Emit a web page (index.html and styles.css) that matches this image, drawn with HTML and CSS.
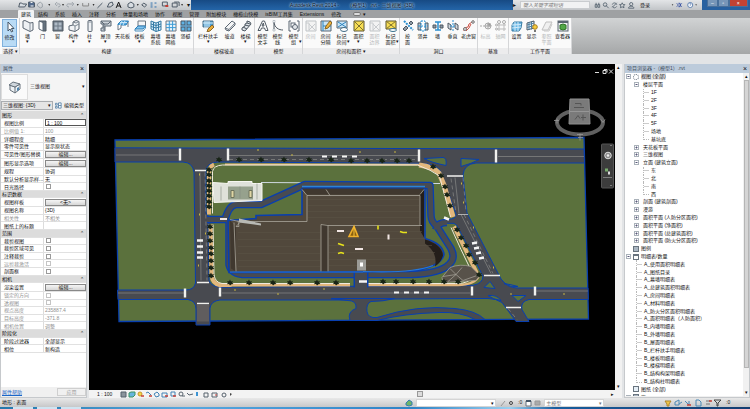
FILE: index.html
```
<!DOCTYPE html>
<html lang="zh-CN">
<head>
<meta charset="utf-8">
<title>Autodesk Revit 2014</title>
<link rel="stylesheet" href="styles.css">
</head>
<body>
<svg class="defs" aria-hidden="true">
  <defs>
    <g id="i-arrow"><path d="M4 1v9l2-2 1.500 3 1.300-.7L7.400 7.500H10z" fill="#fff" stroke="#456"/></g>
    <g id="i-wall"><path d="M1 1l2-.5L8 3l3-.5V10l-3 1.500L1 8z" fill="#eef1f4" stroke="#5b6672"/><path d="M8 3v8" stroke="#8a949e"/></g>
    <g id="i-door"><path d="M2 1h7v10H6" fill="#66727e" stroke="#4f5963"/><path d="M2 1l4 1.500V11L2 9z" fill="#fff" stroke="#5b6672"/></g>
    <g id="i-window"><path d="M1 1h10v10H1z" fill="#6e7a86" stroke="#4f5963"/><path d="M2.500 2.500h3v3h-3zM6.500 2.500h3v3h-3zM2.500 6.500h3v3h-3zM6.500 6.500h3v3h-3z" fill="#aebac6"/></g>
    <g id="i-comp"><path d="M1 6l4-1V2l3-1.500 3 1V9l-4 2.500L1 10z" fill="#f2f4f6" stroke="#5b6672"/><path d="M5 5l2 1v5M7 6l4-2M5 2l3 1 3-1.500" fill="none" stroke="#7d8892"/></g>
    <g id="i-column"><rect x="4" y=".5" width="4" height="11" rx="1" fill="#eef1f4" stroke="#5b6672"/><path d="M4 2h4" stroke="#8a949e"/></g>
    <g id="i-roof"><path d="M1 1h10v5H5v5H1V8h2V4H1z" fill="#cdd3d9" stroke="#5b6672"/><path d="M1 1l3 3M11 1L8 4H4v6" fill="none" stroke="#5b6672"/></g>
    <g id="i-ceiling"><path d="M1 4l3-3h7.500L9 5H1z" fill="#4fa8e0" stroke="#2d7fb8"/><path d="M3 2.500h7M5 1L3 5M8 1L6 5" stroke="#c7e5f8"/><path d="M1 5v5l3-2V5M11 2v5" fill="#fff" stroke="#6c7782"/></g>
    <g id="i-floor"><path d="M4 1h7.500v5H4z" fill="#f5f6f7" stroke="#6c7782"/><path d="M1 9l3-3h7.500L9 9z" fill="#83c5ee" stroke="#2d7fb8"/><path d="M1 9v2h8l2.500-3V6" fill="none" stroke="#4b90be"/></g>
    <g id="i-curtain"><path d="M1 1l5 2 5-2v9l-5 1.500L1 9z" fill="#d8edf9" stroke="#357ba5"/><path d="M1 4l5 1.500L11 4M1 6.500L6 8l5-1.500M3.500 2v8M6 3v8.500M8.500 2v9" fill="none" stroke="#357ba5"/></g>
    <g id="i-grid"><path d="M1 1h10v10H1z" fill="#e8f4fb" stroke="#6c7782"/><path d="M4.300 1v10M7.600 1v10M1 4.300h10M1 7.600h10" stroke="#3c9bd5"/></g>
    <g id="i-mullion"><path d="M1 1h4v4H1zM7 1h4v4H7zM1 7h4v4H1zM7 7h4v4H7z" fill="#5fb3e5" stroke="#4a5561"/><path d="M6 0v12M0 6h12" stroke="#267fb8"/></g>
    <g id="i-rail"><path d="M1 1h10v6H1z" fill="#4a9fd2" stroke="#4b6d84"/><path d="M3 1v8M5 1v9M7 1v6M1 3h10" stroke="#d8edf9"/><path d="M10 5L6 9l-1 3 3-1 4-4z" fill="#e9ad3d" stroke="#896527"/></g>
    <g id="i-ramp"><path d="M1 8l7-7 3 2v2l-6 6-3-1z" fill="#f4f5f6" stroke="#5b6672"/><path d="M1 8l4 1.500L11 3M5 9.500V11" fill="none" stroke="#6c7782"/></g>
    <g id="i-stair"><path d="M2 8l3-2V4l2-1V1l3 1 1 2-6 7-3-1z" fill="#dfe4e8" stroke="#4f5963"/><path d="M3 7l4 2M5 5l4 1M7 3l3 1" stroke="#4f5963"/></g>
    <g id="i-text"><path d="M1 10.500L5.500 1h2L11 10.500H8.500L7.500 8H4.500l-1 2.500zM5 6h2l-.7-3z" fill="#fff" stroke="#4f5963"/></g>
    <g id="i-line"><path d="M2 1v8M2 1c0 7 5 9 9 9" fill="none" stroke="#4f5963"/><path d="M1 .500h2v2H1zM1 9h2v2H1z" fill="#fff" stroke="#8a949e" stroke-width=".5"/></g>
    <g id="i-group"><path d="M3 1H1v10h2M9 1h2v10H9" fill="none" stroke="#5b6672"/><rect x="3" y="3" width="4" height="4" fill="#fff" stroke="#5b6672"/><circle cx="7" cy="7" r="2.500" fill="#e1e5e9" stroke="#5b6672"/></g>
    <g id="i-room"><path d="M1 1h10v10H1z" fill="#f3f3f3" stroke="#bfc3c6"/><path d="M4 4l6 6M10 4l-6 6M1 3h3v8" fill="none" stroke="#c8cbce"/></g>
    <g id="i-roomsep"><path d="M1 1h10v10H1z" fill="#cbe6f7" stroke="#5b6672"/><path d="M3 1v10M3 6h8" stroke="#2f83bd"/><path d="M10 1L6 6l-1 3 3-1 4-5z" fill="#efb43f" stroke="#8c6722"/></g>
    <g id="i-roomtag"><path d="M1 1h10v7H1z" fill="#cbe6f7" stroke="#5b6672"/><path d="M2 2l8 5M10 2L2 7" stroke="#2f83bd"/><ellipse cx="8" cy="9.500" rx="3.500" ry="2" fill="#fff" stroke="#416b86"/></g>
    <g id="i-area"><path d="M1 1h10v10H1z" fill="#f8de54" stroke="#5b5530"/><path d="M1 1l10 10M11 1L1 11" stroke="#807330"/></g>
    <g id="i-areatag"><path d="M1 1h10v8H1z" fill="#f8de54" stroke="#5b5530"/><path d="M1 1l10 8M11 1L1 9" stroke="#807330"/><ellipse cx="8" cy="10" rx="3.500" ry="1.500" fill="#fff" stroke="#38718e"/></g>
    <g id="i-face"><path d="M1 9l3-3 2 2-3 3zM7 3l2-2 2 2-2 2z" fill="#8e9aa6" stroke="#4f5963"/><path d="M2 1l9 9" stroke="#2b8fd0" stroke-width="2" stroke-dasharray="2 1"/></g>
    <g id="i-shaft"><path d="M1 3h3v7H1zM8 3h3v7H8z" fill="#b9c2ca" stroke="#4f5963"/><path d="M4 1h4v10H4zM1 6h10" fill="#fff" stroke="#2b8fd0" stroke-dasharray="2 1"/></g>
    <g id="i-wallop"><path d="M1 5h3v3H1zM8 5h3v3H8z" fill="#8e9aa6" stroke="#4f5963"/><path d="M3 2h6M3 10h6M6 2v8" stroke="#2b8fd0" stroke-width="1.500"/></g>
    <g id="i-vert"><path d="M1 3l3 2v5L1 8zM8 3l3 2v5L8 8z" fill="#d0d6dc" stroke="#4f5963"/><path d="M6 0v12M3 6h6" stroke="#2b8fd0" stroke-dasharray="2 1"/></g>
    <g id="i-dormer"><path d="M1 11V8l4-1 1-3 5-3M3 11l3-3 2-4" fill="none" stroke="#cc5145"/><circle cx="2" cy="9" r="1.500" fill="#ddd" stroke="#777"/><circle cx="10" cy="2" r="1.300" fill="#ddd" stroke="#777"/></g>
    <g id="i-level"><path d="M0 6h5" stroke="#aaa" stroke-dasharray="2 1"/><circle cx="8" cy="6" r="3" fill="#eee" stroke="#aaa"/><path d="M8 3v6M5 6h6M8 6V3a3 3 0 0 1 3 3z" fill="#999" stroke="#aaa"/></g>
    <g id="i-axes"><path d="M4 3v8M9 3v8M2 5h9M2 9h9" stroke="#bbb"/><circle cx="4" cy="2" r="1.500" fill="#fff" stroke="#aaa"/><circle cx="9" cy="2" r="1.500" fill="#fff" stroke="#aaa"/><circle cx="1.500" cy="5" r="1" fill="#fff" stroke="#aaa"/><circle cx="1.500" cy="9" r="1" fill="#fff" stroke="#aaa"/></g>
    <g id="i-plane"><path d="M1 5l2-3h8l-1 6-2 3H1z" fill="#68b7e6" stroke="#397ba2"/><path d="M1 8l9-1M1 5l9-.500M4 2v9M7 2v9" stroke="#d3ebf9"/></g>
    <g id="i-show"><path d="M1 3l7-2v7l-7 2z" fill="#eef5fa" stroke="#4f5963"/><path d="M3 2v8M5.500 1.500v8M1 5l7-2M1 7.500l7-2" stroke="#4f7f9f"/><circle cx="9" cy="7" r="2.300" fill="#f5cd3f" stroke="#a87d1d"/><path d="M8 10h2v2H8z" fill="#777"/></g>
    <g id="i-ref"><path d="M1 10l4-8h6l-4 8z" fill="#f0f0f0" stroke="#c0c0c0"/><path d="M3 10v1h5l3-7" fill="none" stroke="#c9c9c9"/></g>
    <g id="i-viewer"><rect x="1" y="1" width="10" height="10" fill="#eef0f2" stroke="#5b6672"/><path d="M1 2h10" stroke="#5b6672" stroke-width="2"/><path d="M3 5l3-1 3 1v4L6 10 3 9z" fill="#51a747" stroke="#2e7427"/></g>
    <g id="tree"><path d="M0-3l1 2 2-.500-1 1.500 1.500 1.500-2 .2L0 3l-1-1.500-2 .2 1-1.700-1-1.500 2 .3z" fill="#182416"/></g>
    <g id="plus"><rect x=".5" y=".5" width="4" height="4" fill="#fff" stroke="#aab2ba"/><path d="M1.500 2.500h2M2.500 1.500v2" stroke="#557"/></g>
    <g id="minus"><rect x=".5" y=".5" width="4" height="4" fill="#fff" stroke="#aab2ba"/><path d="M1.500 2.500h2" stroke="#557"/></g>
  </defs>
</svg>

<header class="titlebar">
  <div class="quick">
    <svg viewBox="0 0 185 10" class="quick-icons" aria-hidden="true">
      <g fill="none" stroke="#4d5965">
        <path d="M15 7l1-4h2l1 1h4l-2 3z" fill="#d8dde2"/><path d="M25 2h5l1 1v4h-6z" fill="#536b8d"/><path d="M27 2.500h2M27 6h3" stroke="#fff"/>
        <path d="M34 4l3-2 2 2v3l-2 1-3-2z" stroke="#9aa1a8"/><path d="M55 7c3 0 3-4-1-3M54 2l-2 2 2 2" stroke="#9aa1a8"/><path d="M66 7c-3 0-3-4 1-3h3M69 2l2 2-2 2" stroke="#9aa1a8"/>
        <path d="M80 3v3M80 6h6M86 3v3" stroke="#888"/><path d="M95 8l5-5"/><path d="M105 7l2-4 3-1 1 3-3 2z"/><path d="M114 8l2.500-6L119 8M115 6h3" stroke="#111"/>
        <path d="M126 4l3-2 3 2v3l-3 1-3-1z" fill="#d8dde2"/><path d="M140 5l2-2 3 2-2 2z"/><path d="M149 3h2M149 5h2M149 7h2M153 3h2M153 7h2" stroke="#2d6fac"/><path d="M161 2h5v4h-5z"/><path d="M164 6h3" stroke="#c43b31" stroke-width="2"/><path d="M171 3h5v4h-5zM173 2h5v4"/>
      </g>
      <path d="M45 4h2l-1 2zM59 4h2l-1 2zM74 4h2l-1 2zM90 4h2l-1 2zM135 4h2l-1 2zM180 4h2l-1 2z" fill="#333"/>
    </svg>
    <button class="more" aria-label="自定义快速访问工具栏">▾</button>
  </div>
  <h1 class="doc-title"><span>Autodesk Revit 2014 -</span><span>（模型1）.rvt - 三维视图: {3D}</span></h1>
  <div class="help">
    <span class="play">▸</span>
    <input class="search" type="text" aria-label="搜索" placeholder="键入关键字或短语">
    <svg viewBox="0 0 50 10" class="help-icons" aria-hidden="true"><g fill="none" stroke="#596673"><path d="M3 7V4h2v3zM6 7V4h2v3zM4 4V2M7 4V2"/><circle cx="14" cy="4" r="2"/><path d="M15 5l3 3M22 7l5-5M22 4c1-3 4-2 5 0M22 6c2 3 4 1 5 0"/><path d="M33 2l1 2h2l-1.500 1.500.5 2-2-1-2 1 .5-2L30 4h2z"/><circle cx="43" cy="3.500" r="1.800"/><path d="M40 8c0-3 6-3 6 0z"/></g></svg>
    <a href="#" class="login">登录</a>
    <svg viewBox="0 0 38 10" class="help-tail" aria-hidden="true"><path d="M2 4h2l-1 2zM30 4h2l-1 2z" fill="#444"/><path d="M8 3l2 2-2 2M14 3l-2 2 2 2M10 3h2v4h-2" fill="none" stroke="#2b48a0"/><circle cx="24" cy="5" r="3" fill="#fff" stroke="#4d74a8"/><path d="M23 4c0-1 2-1 2 0l-1 1v1" fill="none" stroke="#2b58a0" stroke-width=".7"/></svg>
  </div>
  <div class="window-buttons"><button aria-label="最小化">–</button><button aria-label="还原">▫</button><button class="close" aria-label="关闭">×</button></div>
</header>

<nav class="tabs">
  <a href="#" class="active">建筑</a><a href="#">结构</a><a href="#">系统</a><a href="#">插入</a><a href="#">注释</a><a href="#">分析</a><a href="#">体量和场地</a><a href="#">协作</a><a href="#">视图</a><a href="#">管理</a><a href="#">附加模块</a><a href="#">橄榄山快模</a><a href="#">isBIM工具集</a><a href="#">Extensions</a><a href="#">修改</a>
  <button class="ribbon-toggle" aria-label="最小化功能区"><span></span>▾</button>
</nav>

<section class="ribbon">
  <div class="group select-group"><div class="tools"><button class="tool current"><svg viewBox="0 0 12 12"><use href="#i-arrow"/></svg><span>修改</span></button></div><h2>选择 ▾</h2></div>
  <div class="group"><div class="tools">
    <button class="tool drop"><svg viewBox="0 0 12 12"><use href="#i-wall"/></svg><span>墙</span></button>
    <button class="tool"><svg viewBox="0 0 12 12"><use href="#i-door"/></svg><span>门</span></button>
    <button class="tool"><svg viewBox="0 0 12 12"><use href="#i-window"/></svg><span>窗</span></button>
    <button class="tool wide drop"><svg viewBox="0 0 12 12"><use href="#i-comp"/></svg><span>构件</span></button>
    <button class="tool drop"><svg viewBox="0 0 12 12"><use href="#i-column"/></svg><span>柱</span></button>
    <button class="tool wide drop"><svg viewBox="0 0 12 12"><use href="#i-roof"/></svg><span>屋顶</span></button>
    <button class="tool wide"><svg viewBox="0 0 12 12"><use href="#i-ceiling"/></svg><span>天花板</span></button>
    <button class="tool wide drop"><svg viewBox="0 0 12 12"><use href="#i-floor"/></svg><span>楼板</span></button>
    <button class="tool"><svg viewBox="0 0 12 12"><use href="#i-curtain"/></svg><span>幕墙<br>系统</span></button>
    <button class="tool"><svg viewBox="0 0 12 12"><use href="#i-grid"/></svg><span>幕墙<br>网格</span></button>
    <button class="tool"><svg viewBox="0 0 12 12"><use href="#i-mullion"/></svg><span>竖梃</span></button>
  </div><h2>构建</h2></div>
  <div class="group"><div class="tools">
    <button class="tool widest drop"><svg viewBox="0 0 12 12"><use href="#i-rail"/></svg><span>栏杆扶手</span></button>
    <button class="tool"><svg viewBox="0 0 12 12"><use href="#i-ramp"/></svg><span>坡道</span></button>
    <button class="tool wide drop"><svg viewBox="0 0 12 12"><use href="#i-stair"/></svg><span>楼梯</span></button>
  </div><h2>楼梯坡道</h2></div>
  <div class="group"><div class="tools">
    <button class="tool"><svg viewBox="0 0 12 12"><use href="#i-text"/></svg><span>模型<br>文字</span></button>
    <button class="tool"><svg viewBox="0 0 12 12"><use href="#i-line"/></svg><span>模型<br>线</span></button>
    <button class="tool wide side"><svg viewBox="0 0 12 12"><use href="#i-group"/></svg><span>模型<br>组</span></button>
  </div><h2>模型</h2></div>
  <div class="group"><div class="tools">
    <button class="tool" disabled><svg viewBox="0 0 12 12"><use href="#i-room"/></svg><span>房间</span></button>
    <button class="tool"><svg viewBox="0 0 12 12"><use href="#i-roomsep"/></svg><span>房间<br>分隔</span></button>
    <button class="tool wide side"><svg viewBox="0 0 12 12"><use href="#i-roomtag"/></svg><span>标记<br>房间</span></button>
    <button class="tool wide drop"><svg viewBox="0 0 12 12"><use href="#i-area"/></svg><span>面积</span></button>
    <button class="tool" disabled><svg viewBox="0 0 12 12"><use href="#i-room"/></svg><span>面积<br>边界</span></button>
    <button class="tool wide side"><svg viewBox="0 0 12 12"><use href="#i-areatag"/></svg><span>标记<br>面积</span></button>
  </div><h2>房间和面积 ▾</h2></div>
  <div class="group"><div class="tools">
    <button class="tool"><svg viewBox="0 0 12 12"><use href="#i-face"/></svg><span>按<br>面</span></button>
    <button class="tool"><svg viewBox="0 0 12 12"><use href="#i-shaft"/></svg><span>竖井</span></button>
    <button class="tool"><svg viewBox="0 0 12 12"><use href="#i-wallop"/></svg><span>墙</span></button>
    <button class="tool"><svg viewBox="0 0 12 12"><use href="#i-vert"/></svg><span>垂直</span></button>
    <button class="tool wide"><svg viewBox="0 0 12 12"><use href="#i-dormer"/></svg><span>老虎窗</span></button>
  </div><h2>洞口</h2></div>
  <div class="group"><div class="tools">
    <button class="tool" disabled><svg viewBox="0 0 12 12"><use href="#i-level"/></svg><span>标高</span></button>
    <button class="tool" disabled><svg viewBox="0 0 12 12"><use href="#i-axes"/></svg><span>轴网</span></button>
  </div><h2>基准</h2></div>
  <div class="group"><div class="tools">
    <button class="tool"><svg viewBox="0 0 12 12"><use href="#i-plane"/></svg><span>设置</span></button>
    <button class="tool"><svg viewBox="0 0 12 12"><use href="#i-show"/></svg><span>显示</span></button>
    <button class="tool" disabled><svg viewBox="0 0 12 12"><use href="#i-ref"/></svg><span>参照<br>平面</span></button>
    <button class="tool wide"><svg viewBox="0 0 12 12"><use href="#i-viewer"/></svg><span>查看器</span></button>
  </div><h2>工作平面</h2></div>
</section>

<main class="workspace">
  <aside class="palette">
    <header class="panel-head"><h2>属性</h2><button aria-label="关闭属性">×</button></header>
    <div class="type-selector">
      <div class="type-thumb"><svg viewBox="0 0 14 14" aria-hidden="true"><path d="M2 5l5 2 5-3v5l-5 4-5-3z" fill="#edf1f4" stroke="#66717b"/><path d="M1 5l4-3 7 2-5 3zM7 7v6" fill="#cfd6dc" stroke="#66717b"/><path d="M9 8l2-1v3l-2 1z" fill="#4f85ae"/></svg></div>
      <span>三维视图</span><button aria-label="选择类型">▾</button>
    </div>
    <div class="filter">
      <div class="combo"><select aria-label="实例"><option>三维视图: {3D}</option></select></div>
      <button class="edit-type"><svg viewBox="0 0 8 8" aria-hidden="true"><path d="M.500 1.500h2v2h-2zM.500 5h2v2h-2zM4 1h3v6H4zM4 4h3" fill="#fff" stroke="#5983a8"/></svg>编辑类型</button>
    </div>
    <div class="props-box">
    <table class="props">
      <tbody>
      <tr class="cat"><th colspan="2">图形<i>⌃</i></th></tr>
      <tr><th><label for="scale">视图比例</label></th><td><input id="scale" type="text" class="edit" value="1 : 100"></td></tr>
      <tr class="dim"><th>比例值 1:</th><td>100</td></tr>
      <tr><th>详细程度</th><td>精细</td></tr>
      <tr><th>零件可见性</th><td>显示原状态</td></tr>
      <tr><th>可见性/图形替换</th><td><button class="cell-btn">编辑...</button></td></tr>
      <tr><th>图形显示选项</th><td><button class="cell-btn">编辑...</button></td></tr>
      <tr><th>规程</th><td>协调</td></tr>
      <tr><th>默认分析显示样...</th><td>无</td></tr>
      <tr><th><label for="sun">日光路径</label></th><td><input id="sun" type="checkbox"></td></tr>
      <tr class="cat"><th colspan="2">标识数据<i>⌃</i></th></tr>
      <tr><th>视图样板</th><td><button class="cell-btn">&lt;无&gt;</button></td></tr>
      <tr><th>视图名称</th><td>{3D}</td></tr>
      <tr class="dim"><th>相关性</th><td>不相关</td></tr>
      <tr><th>图纸上的标题</th><td></td></tr>
      <tr class="cat"><th colspan="2">范围<i>⌃</i></th></tr>
      <tr><th><label for="crop">裁剪视图</label></th><td><input id="crop" type="checkbox"></td></tr>
      <tr><th><label for="cropv">裁剪区域可见</label></th><td><input id="cropv" type="checkbox"></td></tr>
      <tr><th><label for="ann">注释裁剪</label></th><td><input id="ann" type="checkbox"></td></tr>
      <tr class="dim"><th><label for="far">远剪裁激活</label></th><td><input id="far" type="checkbox" disabled></td></tr>
      <tr><th><label for="sect">剖面框</label></th><td><input id="sect" type="checkbox"></td></tr>
      <tr class="cat"><th colspan="2">相机<i>⌃</i></th></tr>
      <tr><th>渲染设置</th><td><button class="cell-btn">编辑...</button></td></tr>
      <tr class="dim"><th><label for="lock">锁定的方向</label></th><td><input id="lock" type="checkbox" disabled></td></tr>
      <tr class="dim"><th><label for="persp">透视图</label></th><td><input id="persp" type="checkbox" disabled></td></tr>
      <tr class="dim"><th>视点高度</th><td>235887.4</td></tr>
      <tr class="dim"><th>目标高度</th><td>-371.8</td></tr>
      <tr class="dim"><th>相机位置</th><td>调整</td></tr>
      <tr class="cat"><th colspan="2">阶段化<i>⌃</i></th></tr>
      <tr><th>阶段过滤器</th><td>全部显示</td></tr>
      <tr><th>相位</th><td>新构造</td></tr>
      </tbody>
    </table>
    </div>
    <footer class="palette-foot"><a href="#">属性帮助</a><button disabled>应用</button></footer>
  </aside>

  <section class="view">
    <div class="stage">
      <svg class="model" viewBox="89 64 526 325" role="img" aria-label="场地三维视图">
        <path d="M115 139.500L584 137l4.500 181.500L119 321z" fill="#5b713d" stroke="#083fb0" stroke-width="1.300"/>
        <!-- roads -->
        <g fill="#484a50" stroke="#083fb0" stroke-width="1">
          <path d="M115 147.300l469 1.200.5 14H476q-12 1-13 12l4 38 34 66q7 9 16 9h71l.3 11.500H529q-9 2-7 10l7 12H516l-14-19q-6-4-14-4l-95 .5-31 1H220q-9 1-10 8v17H196v-16q0-8-8-9.500h-70l-.5-9.500H186q8 0 9.500-7L194 172q-1-10-11-10.500h-68z"/>
          <path d="M331 298h64q-12 3-24 3-5 2-4 10 1 7 10 6 40-13 78-9 21 2 30 11h-10q-14-8-36-7-35 1-62 8h-27q-3-9 6-12 1-8-8-8-9-1-17-2z"/>
        </g>
        <path d="M206 169q2-7 12-7.500l200 1.300q17 0 22 7l16 44q0 5-8 5h-4v4h10q3 1 5 6l24 47q0 7-10 9l-250 2q-12 0-14-7l-1-54q0-4 5-4v-5q-6 0-7-5z" fill="#5b713d" stroke="#083fb0"/>
        <!-- pavements -->
        <g fill="none" stroke="#e2b77d" stroke-width="4">
          <path d="M209 214v-42q0-6 5-8M210.500 224l1 51q1 8 8 9.500h12"/>
          <path d="M225 163.800l195 .4" stroke-width="1.800"/>
          <path d="M228 284.700h122M368 284.500h90q16 0 21-9" stroke-width="2.500"/>
          <path d="M419 164.500q15 2 20 8l5 12 9 32" stroke-width="5"/>
          <path d="M454 226l10 20 14 29"/>
        </g>
        <g fill="none" stroke="#efe9dc" stroke-width="1"><path d="M212.500 213v-42q1-6 10-6.500h195q14 5 22 11l11 41M213 224l1 50q1 8 8 9h128M368 283h90q10 0 16-7M451 227l10 22 13 27"/><path d="M261 182l170 1h9" stroke="#cfd9df"/></g>
        <!-- lane markings -->
        <g fill="none" stroke="#a3a39c" stroke-width=".5"><path d="M116 154.500h62M229 155h189M498 156h86M118 292.500h66M222 292.500h248M536 290.500h52M200 172l1 108M455 177l4 36M461 214l30 59"/><path d="M205 172l2 108M451 178l5 34M464 214l29 59M229 159h189M508 308l9 11M463 177l3 34" stroke-dasharray="4 3"/></g>
        <g stroke="#f1f1ee" stroke-width="2.400"><path d="M180 148v12M228 148v12M419 149v12M496 149v13M185 288v9M220 287v9M472 286v9M535 286v9"/><path d="M195 170h11M197 282h12M197 303h12M447 175.500h16M484 275h16M506 307h15" stroke-width="1.300"/><path d="M458 214h10" stroke-width=".6"/></g>
        <path d="M197 304h12v17h-12z" fill="#605d5e"/>
        <g fill="#5b713d" stroke="#083fb0"><path d="M424 158l19-1q4 0 3 8-15-3-22-7zM461 158l18 1q-7 4-18 7zM484 287l6-6 5 7zM504 283q7 1 14 3-8 1-14-3zM512 295h14l-8 6zM488 295q9-1 13 5-8-1-13-5z"/></g>
        <!-- site drive -->
        <g fill="none" stroke-linejoin="round">
          <path d="M207 219h18q4-14 11-15h25l44-20 125 1 1 30q0 6 6 11l14 22q5 10-2 16-9 9-38 10h-162q-18 1-20-10V219M447 222q-10 0-11 7" stroke="#083fb0" stroke-width="7.500"/>
          <path d="M207 219h18q4-14 11-15h25l44-20 125 1 1 30q0 6 6 11l14 22q5 10-2 16-9 9-38 10h-162q-18 1-20-10V219M447 222q-10 0-11 7" stroke="#484b52" stroke-width="5"/>
          <path d="M361 271v16" stroke="#083fb0" stroke-width="15"/><path d="M361 271v17" stroke="#484b52" stroke-width="12"/>
        </g>
        <!-- small court -->
        <path d="M213 182l15 1v-2h24v2h10v17l-48 2z" fill="#dfe1da" stroke="#f6f6f0"/><path d="M228 186h25v13h-25z" fill="#96a18d"/><path d="M231 190h3v7h-3zM249 190h3v7h-3z" fill="#dfd6a4" stroke="#6e735c"/><path d="M221 186v14M240 186v12M257 183v16" stroke="#848c80" stroke-width=".6"/>
        <!-- main building -->
        <path d="M302 188h123v50q18 5 19 16-3 13-35 17l-180 1-1-52 28-2v-3l46-1z" fill="#51483c" stroke="#083fb0" stroke-width="1.600"/>
        <path d="M302 188h122l-4 6H307zM230 220l6 6v45l-5-3zM321 224h7v47h-7z" fill="#40382f"/>
        <path d="M420 194l4-5v48l-4-7zM425 239q17 5 18 16-2 7-8 11 3-14-10-23z" fill="#241e1a"/>
        <g fill="none" stroke="#5d5446" stroke-width=".5"><path d="M308 199h111M308 205h111M308 211h111M308 217h111M238 232h82M238 239h82M238 246h82M238 253h82M238 260h82M238 266h82M329 231h93M329 238h96M329 245h103M329 252h106M329 259h106M329 265h98"/></g>
        <g fill="none" stroke="#aaa69b" stroke-width=".8"><path d="M302 189l5 6h113v30M307 195v26h-68l-9-2M236 226h3l-1-6M234 222l2 49M328 271v-46h94M328 225l-7-1v47M326 189l4 6M420 194l4-5M236 226l4-4"/></g>
        <path d="M239 218l22 5v2l-22-3z" fill="#b8b9b4"/><path d="M230 271.500h133M363 271q50 2 70-6" fill="none" stroke="#2877d5" stroke-width="1.200"/>
        <path d="M302 186h123" stroke="#2a82d8" stroke-width="1.300"/>
        <path d="M357 259h9v11h-9z" fill="#9b9b97"/><path d="M360 262h3v4h-3z" fill="#fff"/>
        <path d="M354 226l-5 10h9z" fill="#8a6110" stroke="#f0b02b" stroke-width="1.600"/><path d="M354 226v10" stroke="#f6c43a"/>
        <path d="M338 243l3 1 3 1M338 253l3-1 3 1M378 225v4M400 231l3 1h4" fill="none" stroke="#e7e21c" stroke-width="1.600"/><path d="M337 230.500h7M355 248.500h8M388.500 234v5M220 218.500h7" stroke="#f1e6e3" stroke-width="2"/>
        <!-- rock garden -->
        <path d="M442 277l8-10q10-4 21-1l9 9-4 5-33 2z" fill="#58524a" stroke="#aaa79e" stroke-width=".7"/><path d="M443 276l13-2 6-7M456 274l7 6 14-5M450 268l6 6-8 7" fill="none" stroke="#aaa79e" stroke-width=".7"/>
        <!-- vehicles -->
        <g stroke="#f4f4f4" stroke-width="2" stroke-dasharray="5 5"><path d="M322 156h36M394 292h35" /></g>
        <path d="M197 240h6M197 246h6M197 252h6M197 257h6M472 243l5-1M474 248l5-1M476 253l5-1M479 258l5-1M359 281h8M444 217l5 2" stroke="#f4f4f4" stroke-width="2.500"/>
        <g fill="#c5b442"><path d="M257 149h2v1h-2zM291 154h2v1h-2zM199 173h1v2h-1zM199 213h1v2h-1zM205 232h1v2h-1zM198 264h1v2h-1zM234 289h2v1h-2zM277 293h2v1h-2zM323 288h2v1h-2zM359 151h2v1h-2zM394 151h2v1h-2zM461 182h1v2h-1zM463 201h1v2h-1zM473 226h1v2h-1zM493 266h1v2h-1zM510 293h2v1h-2zM563 293h2v1h-2z"/></g>
        <g>
          <use href="#tree" x="209" y="169"/><use href="#tree" x="209" y="174"/><use href="#tree" x="209" y="180"/><use href="#tree" x="209" y="185"/><use href="#tree" x="209" y="190"/><use href="#tree" x="209" y="195"/><use href="#tree" x="209" y="201"/><use href="#tree" x="209" y="206"/>
          <use href="#tree" x="210" y="226"/><use href="#tree" x="210" y="233"/><use href="#tree" x="210" y="240"/><use href="#tree" x="211" y="247"/><use href="#tree" x="211" y="253"/><use href="#tree" x="211" y="260"/><use href="#tree" x="211" y="267"/><use href="#tree" x="211" y="275"/>
          <use href="#tree" x="219" y="159"/><use href="#tree" x="239" y="159"/><use href="#tree" x="261" y="159"/><use href="#tree" x="284" y="159"/><use href="#tree" x="309" y="159"/><use href="#tree" x="331" y="159"/><use href="#tree" x="351" y="160"/><use href="#tree" x="367" y="160"/><use href="#tree" x="382" y="160"/><use href="#tree" x="397" y="160"/><use href="#tree" x="409" y="160"/>
          <use href="#tree" x="230" y="282"/><use href="#tree" x="249" y="282"/><use href="#tree" x="273" y="282"/><use href="#tree" x="290" y="282"/><use href="#tree" x="317" y="282"/><use href="#tree" x="336" y="282"/><use href="#tree" x="383" y="281"/><use href="#tree" x="396" y="281"/><use href="#tree" x="413" y="281"/><use href="#tree" x="429" y="281"/><use href="#tree" x="444" y="281"/><use href="#tree" x="458" y="281"/>
          <use href="#tree" x="433" y="166"/><use href="#tree" x="441" y="175"/><use href="#tree" x="445" y="186"/><use href="#tree" x="447" y="194"/><use href="#tree" x="450" y="205"/><use href="#tree" x="457" y="229"/><use href="#tree" x="461" y="237"/><use href="#tree" x="466" y="245"/><use href="#tree" x="469" y="254"/><use href="#tree" x="475" y="262"/><use href="#tree" x="479" y="274"/>
        </g>
        <!-- view cube -->
        <ellipse cx="580" cy="122" rx="23" ry="12" fill="none" stroke="#606060" stroke-width="4"/>
        <path d="M570 98.500h19l1 25h-21z" fill="#7a7a7a" stroke="#8e8e8e"/><path d="M570 111h19" stroke="#969696"/><path d="M575 103h6v2M575 119l3-4 2 3M583 114v6M581 117h5M574 107h10" fill="none" stroke="#555"/>
        <path d="M554 120h5M557 118v5M601 119l2 3 2-3M577 134h6M578 137h5M580 133v7" fill="none" stroke="#999" stroke-width=".8"/>
        <!-- navigation bar -->
        <rect x="601.500" y="143.500" width="12" height="44" rx="1" fill="#3c3c3c" stroke="#555"/><circle cx="608" cy="155" r="3.300" fill="#888" stroke="#ddd"/><circle cx="608" cy="155" r="1.300" fill="#eee"/><path d="M605 168h3v3h-3z" fill="#79ac6d"/><path d="M608 171h2v3h-2z" fill="#ddd"/><path d="M610 145h2M610 185h2M603 177h9" stroke="#aaa" stroke-width=".6"/>
        <g fill="none" stroke="#ddd"><path d="M595 72h4M603 70h3v3h-3zM604 69h3v3M609 69l4 4M613 69l-4 4"/></g>
      </svg>
    </div>
    <div class="vscroll"><span>▴</span><span>▾</span></div>
    <div class="view-bar">
      <span>1 : 100</span>
      <svg viewBox="0 0 114 8" aria-hidden="true"><g fill="none" stroke="#57626d"><path d="M1 2h5v5H1z" fill="#8b949c"/><path d="M9 3l2-1h4v3l-2 2H9z" fill="#66b5df" stroke="#3d9561"/><circle cx="20" cy="4" r="2" fill="#f4d54e" stroke="#c9982a"/><path d="M26 3l2-1 3 3M34 4l3-2 2 2v2l-3 1zM42 3h5v4h-5zM51 2h4v4h-4z" stroke="#4382b5"/><path d="M21 6h3M29 6h3M45 6h3M53 6h3" stroke="#c84138" stroke-width="1.600"/><circle cx="61" cy="4" r="2"/><path d="M62 6h3M67 3l2 2 4-1M84 3h4v4h-4zM92 3h5v4h-5z"/><path d="M77 2v4" stroke="#3e94d3" stroke-width="2"/><path d="M95 5h2" stroke="#c84138"/><circle cx="104" cy="5" r="2"/></g><path d="M112 4l-2-1v3z" fill="#444"/></svg>
      <div class="hscroll"><i></i><span>▸</span></div>
    </div>
  </section>

  <aside class="browser">
    <header class="panel-head"><h2>项目浏览器 -（模型1）.rvt</h2><button aria-label="关闭项目浏览器">×</button></header>
    <div class="tree-box">
      <ul class="tree">
        <li class="l0 open"><svg viewBox="0 0 5 5"><use href="#minus"/></svg><b class="ic scope"></b><span class="picked">视图 (全部)</span></li>
        <li class="l1"><svg viewBox="0 0 5 5"><use href="#minus"/></svg><span>楼层平面</span></li>
        <li class="l2"><span>1F</span></li><li class="l2"><span>2F</span></li><li class="l2"><span>3F</span></li><li class="l2"><span>4F</span></li><li class="l2"><span>5F</span></li><li class="l2"><span>场地</span></li><li class="l2 end"><span>基坑底</span></li>
        <li class="l1"><svg viewBox="0 0 5 5"><use href="#plus"/></svg><span>天花板平面</span></li>
        <li class="l1"><svg viewBox="0 0 5 5"><use href="#plus"/></svg><span>三维视图</span></li>
        <li class="l1"><svg viewBox="0 0 5 5"><use href="#minus"/></svg><span>立面 (建筑立面)</span></li>
        <li class="l2"><span>东</span></li><li class="l2"><span>北</span></li><li class="l2"><span>南</span></li><li class="l2 end"><span>西</span></li>
        <li class="l1"><svg viewBox="0 0 5 5"><use href="#plus"/></svg><span>剖面 (建筑剖面)</span></li>
        <li class="l1"><svg viewBox="0 0 5 5"><use href="#plus"/></svg><span>漫游</span></li>
        <li class="l1"><svg viewBox="0 0 5 5"><use href="#plus"/></svg><span>面积平面 (人防分区面积)</span></li>
        <li class="l1"><svg viewBox="0 0 5 5"><use href="#plus"/></svg><span>面积平面 (净面积)</span></li>
        <li class="l1"><svg viewBox="0 0 5 5"><use href="#plus"/></svg><span>面积平面 (总建筑面积)</span></li>
        <li class="l1"><svg viewBox="0 0 5 5"><use href="#plus"/></svg><span>面积平面 (防火分区面积)</span></li>
        <li class="l0 leaf"><b class="ic legend"></b><span>图例</span></li>
        <li class="l0"><svg viewBox="0 0 5 5"><use href="#minus"/></svg><b class="ic sched"></b><span>明细表/数量</span></li>
        <li class="l3"><span>A_使用面积明细表</span></li><li class="l3"><span>A_图纸目录</span></li><li class="l3"><span>A_幕墙明细表</span></li><li class="l3"><span>A_总建筑面积明细表</span></li><li class="l3"><span>A_房间明细表</span></li><li class="l3"><span>A_材料明细表</span></li><li class="l3"><span>A_防火分区面积明细表</span></li><li class="l3"><span>A_面积明细表（人防面积）</span></li><li class="l3"><span>B_内墙明细表</span></li><li class="l3"><span>B_外墙明细表</span></li><li class="l3"><span>B_屋面明细表</span></li><li class="l3"><span>B_栏杆扶手明细表</span></li><li class="l3"><span>B_楼板明细表</span></li><li class="l3"><span>B_楼梯明细表</span></li><li class="l3"><span>B_结构构架明细表</span></li><li class="l3 end"><span>B_结构柱明细表</span></li>
        <li class="l0 leaf"><b class="ic sheet"></b><span>图纸 (全部)</span></li>
        <li class="l0"><svg viewBox="0 0 5 5"><use href="#plus"/></svg><b class="ic legend"></b><span>族</span></li>
      </ul>
      <div class="tree-scroll"><span>▴</span><i></i><span>▾</span></div>
    </div>
  </aside>
</main>

<footer class="status">
  <span class="hint">地形 : 表面</span>
  <div class="worksets">
    <svg class="small" viewBox="0 0 8 8" aria-hidden="true"><path d="M1 4l3-3 3 2v3L4 7 1 6z" fill="#6eb46a" stroke="#347eb0"/></svg>
    <div class="combo set"><select aria-label="工作集"><option></option></select></div>
    <svg class="mid" viewBox="0 0 16 8" aria-hidden="true"><path d="M2 7l4-5" stroke="#999"/><circle cx="12" cy="4" r="1.500" fill="none" stroke="#444"/></svg><span>:0</span>
    <svg class="mid" viewBox="0 0 16 8" aria-hidden="true"><path d="M1 2h5v5H1z" fill="#fff" stroke="#65717c"/><path d="M1 2h5" stroke="#456" stroke-width="2"/><path d="M10 2h5v4h-5z" fill="#aaa" stroke="#999"/></svg>
    <div class="combo option"><select aria-label="设计选项"><option>主模型</option></select></div>
  </div>
  <svg class="filters" viewBox="0 0 62 8" aria-hidden="true"><g fill="none" stroke="#4b89b6"><path d="M1 2h6L5 5v2H3V5z" fill="#f0c74a" stroke="#ad852a"/><path d="M11 3l4-2v5h-4zM15 5l3-2M21 2l4 4M25 2v4M32 1h3l2 2v4h-5z"/><path d="M42 2h5M42 5h4" stroke="#777"/><path d="M23 6h4M45 2h3" stroke="#c84138" stroke-width="1.500"/><path d="M50 1h7l-3 3v3h-1V4z" stroke="#444"/></g></svg><span class="count">:0</span>
</footer>
<div class="taskbar"><i></i><i></i><i></i></div>
</body>
</html>
```

FILE: styles.css
```
* { box-sizing: border-box; }

body {
  margin: 0;
  height: 100vh;
  overflow: hidden;
  display: grid;
  grid-template-rows: 10px 8px 36px 1fr 9px 2px;
  background: #e2e4e6;
  color: #111;
  font: 5px/7px "Liberation Sans", "Noto Sans CJK SC", sans-serif;
  white-space: nowrap;
}

button, input, select { font: inherit; color: inherit; margin: 0; padding: 0; border: 0; background: none; border-radius: 0; }
h1, h2 { margin: 0; font: inherit; }
a { color: inherit; text-decoration: none; }
ul { list-style: none; margin: 0; padding: 0; }
svg { display: block; }
.defs { position: absolute; width: 0; height: 0; }

/* Title bar */
.titlebar { display: flex; background: linear-gradient(#e3e5e7, #c2c5c8); }
.quick { display: flex; align-items: center; width: 191px; padding-left: 4px; }
.quick-icons { width: 182px; height: 10px; }
.more { width: 5px; font-size: 6px; }
.doc-title { flex: 1; display: flex; justify-content: center; gap: 8px; background: linear-gradient(#174a84, #2465a8); color: #06101c; line-height: 10px; text-shadow: 0 0 2px #a9c8e8, 0 0 2px #a9c8e8, 0 0 3px #a9c8e8; }
.help { display: flex; align-items: center; width: 189px; gap: 2px; }
.play { width: 5px; font-size: 6px; }
.search { width: 70px; height: 8px; padding: 0 2px; background: #f1f2f3; border: 1px solid #c9cccf; font-style: italic; }
.search::placeholder { color: #777; }
.help-icons { width: 46px; height: 9px; }
.login { width: 28px; }
.help-tail { width: 32px; height: 10px; }
.window-buttons { display: flex; width: 48px; padding: 0 2px 3px 5px; background: #2861a0; }
.window-buttons button { flex: 1; line-height: 6px; border: 1px solid #486f9a; border-top: 0; background: #7796b8; color: #fff; }
.window-buttons .close { flex: 2; background: #c24232; }

/* Tabs */
.tabs { display: flex; gap: 1px; padding-left: 18px; background: #9fa1a3; line-height: 8px; }
.tabs a { padding: 0 3px; }
.tabs .active { background: #f2f3f4; border-radius: 1px 1px 0 0; }
.ribbon-toggle { display: flex; align-items: center; gap: 2px; margin-left: 8px; }
.ribbon-toggle span { width: 8px; height: 4px; border-radius: 2px; background: #ddd; border: 1px solid #777; }

/* Ribbon */
.ribbon { display: flex; background: linear-gradient(#d1d3d4, #a5a7a8); }
.group { display: flex; flex-direction: column; background: #fafafa; border-right: 1px solid #d5d6d8; }
.tools { flex: 1; display: flex; padding-top: 1px; }
.group h2 { height: 6px; line-height: 6px; text-align: center; background: #ececed; }
.tool { position: relative; width: 15px; display: flex; flex-direction: column; align-items: center; gap: 1px; padding-top: 1px; line-height: 6px; text-align: center; }
.tool svg { width: 12px; height: 12px; }
.tool.wide { width: 17px; }
.tool.widest { width: 28px; }
.tool:disabled { color: #b5b7b9; }
.drop::after { content: "▾"; line-height: 3px; }
.side::after { content: "▾"; position: absolute; right: 0; bottom: 4px; }
.select-group { width: 20px; padding-left: 2px; }
.tool.current { border: 1px solid #7fb0dc; background: #b9dbf5; margin-bottom: 1px; padding: 1px 0 0; }

/* Workspace */
.workspace { display: grid; grid-template-columns: 87px 1fr 126px; gap: 2px; padding-top: 10px; min-height: 0; overflow: hidden; }
.panel-head { display: flex; justify-content: space-between; height: 9px; padding: 0 2px; line-height: 9px; background: #bccbdb; color: #3c4a5a; flex: none; }
.panel-head button { font-size: 7px; line-height: 8px; color: #111; }

.palette, .browser { display: flex; flex-direction: column; min-height: 0; border: 1px solid #c6c9cc; border-top: 0; background: #f0f0f0; }
.type-selector { display: flex; align-items: center; height: 27px; gap: 2px; background: #f4f4f4; padding-right: 1px; }
.type-thumb { width: 27px; height: 26px; display: grid; place-items: center; border: 1px solid #ddd; background: #fafafa; }
.type-thumb svg { width: 14px; height: 14px; }
.type-selector span { flex: 1; }
.filter { display: flex; align-items: center; height: 11px; gap: 2px; }
.combo { position: relative; width: 52px; height: 9px; background: #fff; border: 1px solid #aaadb0; }
.combo::after { content: "▾"; position: absolute; right: 1px; top: 0; line-height: 6px; pointer-events: none; }
.combo select { display: block; appearance: none; width: 100%; height: 7px; line-height: 7px; padding: 0 1px; }
.filter .combo { background: #e5e5e5; }
.edit-type { display: flex; align-items: center; gap: 2px; }
.edit-type svg { width: 7px; height: 7px; }
.props-box { flex: 1; min-height: 0; overflow: hidden; background: #fff; }
.props { width: 100%; height: 242px; table-layout: fixed; border-collapse: collapse; }
.props tr { height: 7px; }
.props th, .props td { padding: 0 0 0 3px; height: 7px; line-height: 6px; font-weight: normal; text-align: left; border-bottom: 1px solid #e1e1e1; }
.props td { padding: 0 0 0 1px; border-left: 1px solid #dcdcdc; }
.props .cat th { padding-left: 1px; background: #dcdcdc; }
.props i { float: right; margin-right: 2px; font-style: normal; }
.props .dim { color: #8f8f8f; }
.props .edit { display: block; width: 100%; height: 7px; border: 1px solid #555; padding-left: 1px; line-height: 5px; }
.cell-btn { display: block; width: 100%; height: 7px; line-height: 5px; background: linear-gradient(#f5f5f5, #d6d6d6); border: 1px solid #888; text-align: center; }
.props input[type="checkbox"] { display: block; appearance: none; width: 5px; height: 5px; margin-left: 1px; border: 1px solid #9a9a9a; background: #fff; }
.props input:disabled { border-color: #c4c4c4; }
.palette-foot { display: flex; align-items: center; justify-content: space-between; height: 10px; padding-left: 1px; flex: none; }
.palette-foot a { color: #1b66c8; text-decoration: underline; }
.palette-foot button { width: 29px; height: 8px; line-height: 6px; border: 1px solid #cfcfcf; color: #999; }

/* View */
.view { display: grid; grid-template-columns: 1fr 7px; grid-template-rows: 1fr 8px; min-height: 0; min-width: 0; }
.stage { background: #000; min-height: 0; min-width: 0; overflow: hidden; }
.model { width: 100%; height: 100%; }
.vscroll { display: flex; flex-direction: column; justify-content: space-between; align-items: center; background: #f1f1f1; }
.view-bar { grid-column: 1 / 3; display: flex; align-items: center; gap: 8px; padding-left: 8px; background: #f3f3f3; }
.view-bar svg { width: 114px; height: 8px; }
.hscroll { flex: 1; display: flex; justify-content: space-between; align-items: center; padding-right: 8px; }
.hscroll i { width: 6px; height: 6px; margin-left: 175px; background: #dcdcdc; border: 1px solid #999; }

/* Project browser */
.tree-box { flex: 1; display: flex; min-height: 0; overflow: hidden; background: #fff; margin-bottom: 1px; }
.tree { flex: 1; height: 328px; flex-shrink: 0; display: grid; grid-auto-rows: 1fr; }
.tree li { display: flex; align-items: center; gap: 2px; min-height: 0; line-height: 7px; }
.tree svg { width: 5px; height: 5px; }
.tree .l0 { padding-left: 1px; }
.tree .l0.leaf { padding-left: 8px; }
.tree .l1 { padding-left: 9px; gap: 4px; }
.l2, .l3 { align-self: stretch; margin-left: 18px; }
.l3 { margin-left: 11px; }
.l2::before, .l3::before { content: ""; width: 5px; height: 4px; align-self: flex-start; border-left: 1px dotted #b9b9b9; border-bottom: 1px dotted #b9b9b9; }
.l2:not(.end)::before, .l3:not(.end)::before { height: 100%; border-bottom: 0; background: linear-gradient(#ccc, #ccc) 0 50% / 5px 1px no-repeat; }
.picked { background: #e8e8e8; }
.ic { width: 6px; height: 6px; border: 1px solid #68737e; background: #fff; }
.scope { border-style: dotted; border-radius: 3px; }
.sched { border-top-width: 2px; }
.legend { background: #aab6c2; }
.sheet { background: #e5eef6; }
.tree-scroll { display: flex; flex-direction: column; align-items: center; width: 6px; background: #f1f1f1; }
.tree-scroll i { width: 5px; height: 288px; background: #d5d5d5; border: 1px solid #b5b5b5; }
.tree-scroll span:last-child { margin-top: auto; }

/* Status bar */
.status { display: flex; align-items: center; background: linear-gradient(#e8e8e8, #c7c8c9); }
.hint { width: 405px; padding-left: 2px; }
.worksets { display: flex; align-items: center; flex: 1; gap: 3px; }
.small { width: 8px; height: 8px; }
.mid { width: 16px; height: 8px; }
.set { width: 80px; }
.option { width: 60px; color: #777; }
.status .combo { height: 8px; border-color: #d5d5d5; }
.filters { width: 62px; height: 8px; }
.count { width: 24px; }

.taskbar { display: flex; gap: 4px; padding-left: 13px; background: linear-gradient(90deg, #2478ac, #58a8df 25%, #2e83c6 55%, #9bd0ef 68%, #195e9e 74%, #133c70); }
.taskbar i { width: 20px; background: #cfe4f1; }
```
